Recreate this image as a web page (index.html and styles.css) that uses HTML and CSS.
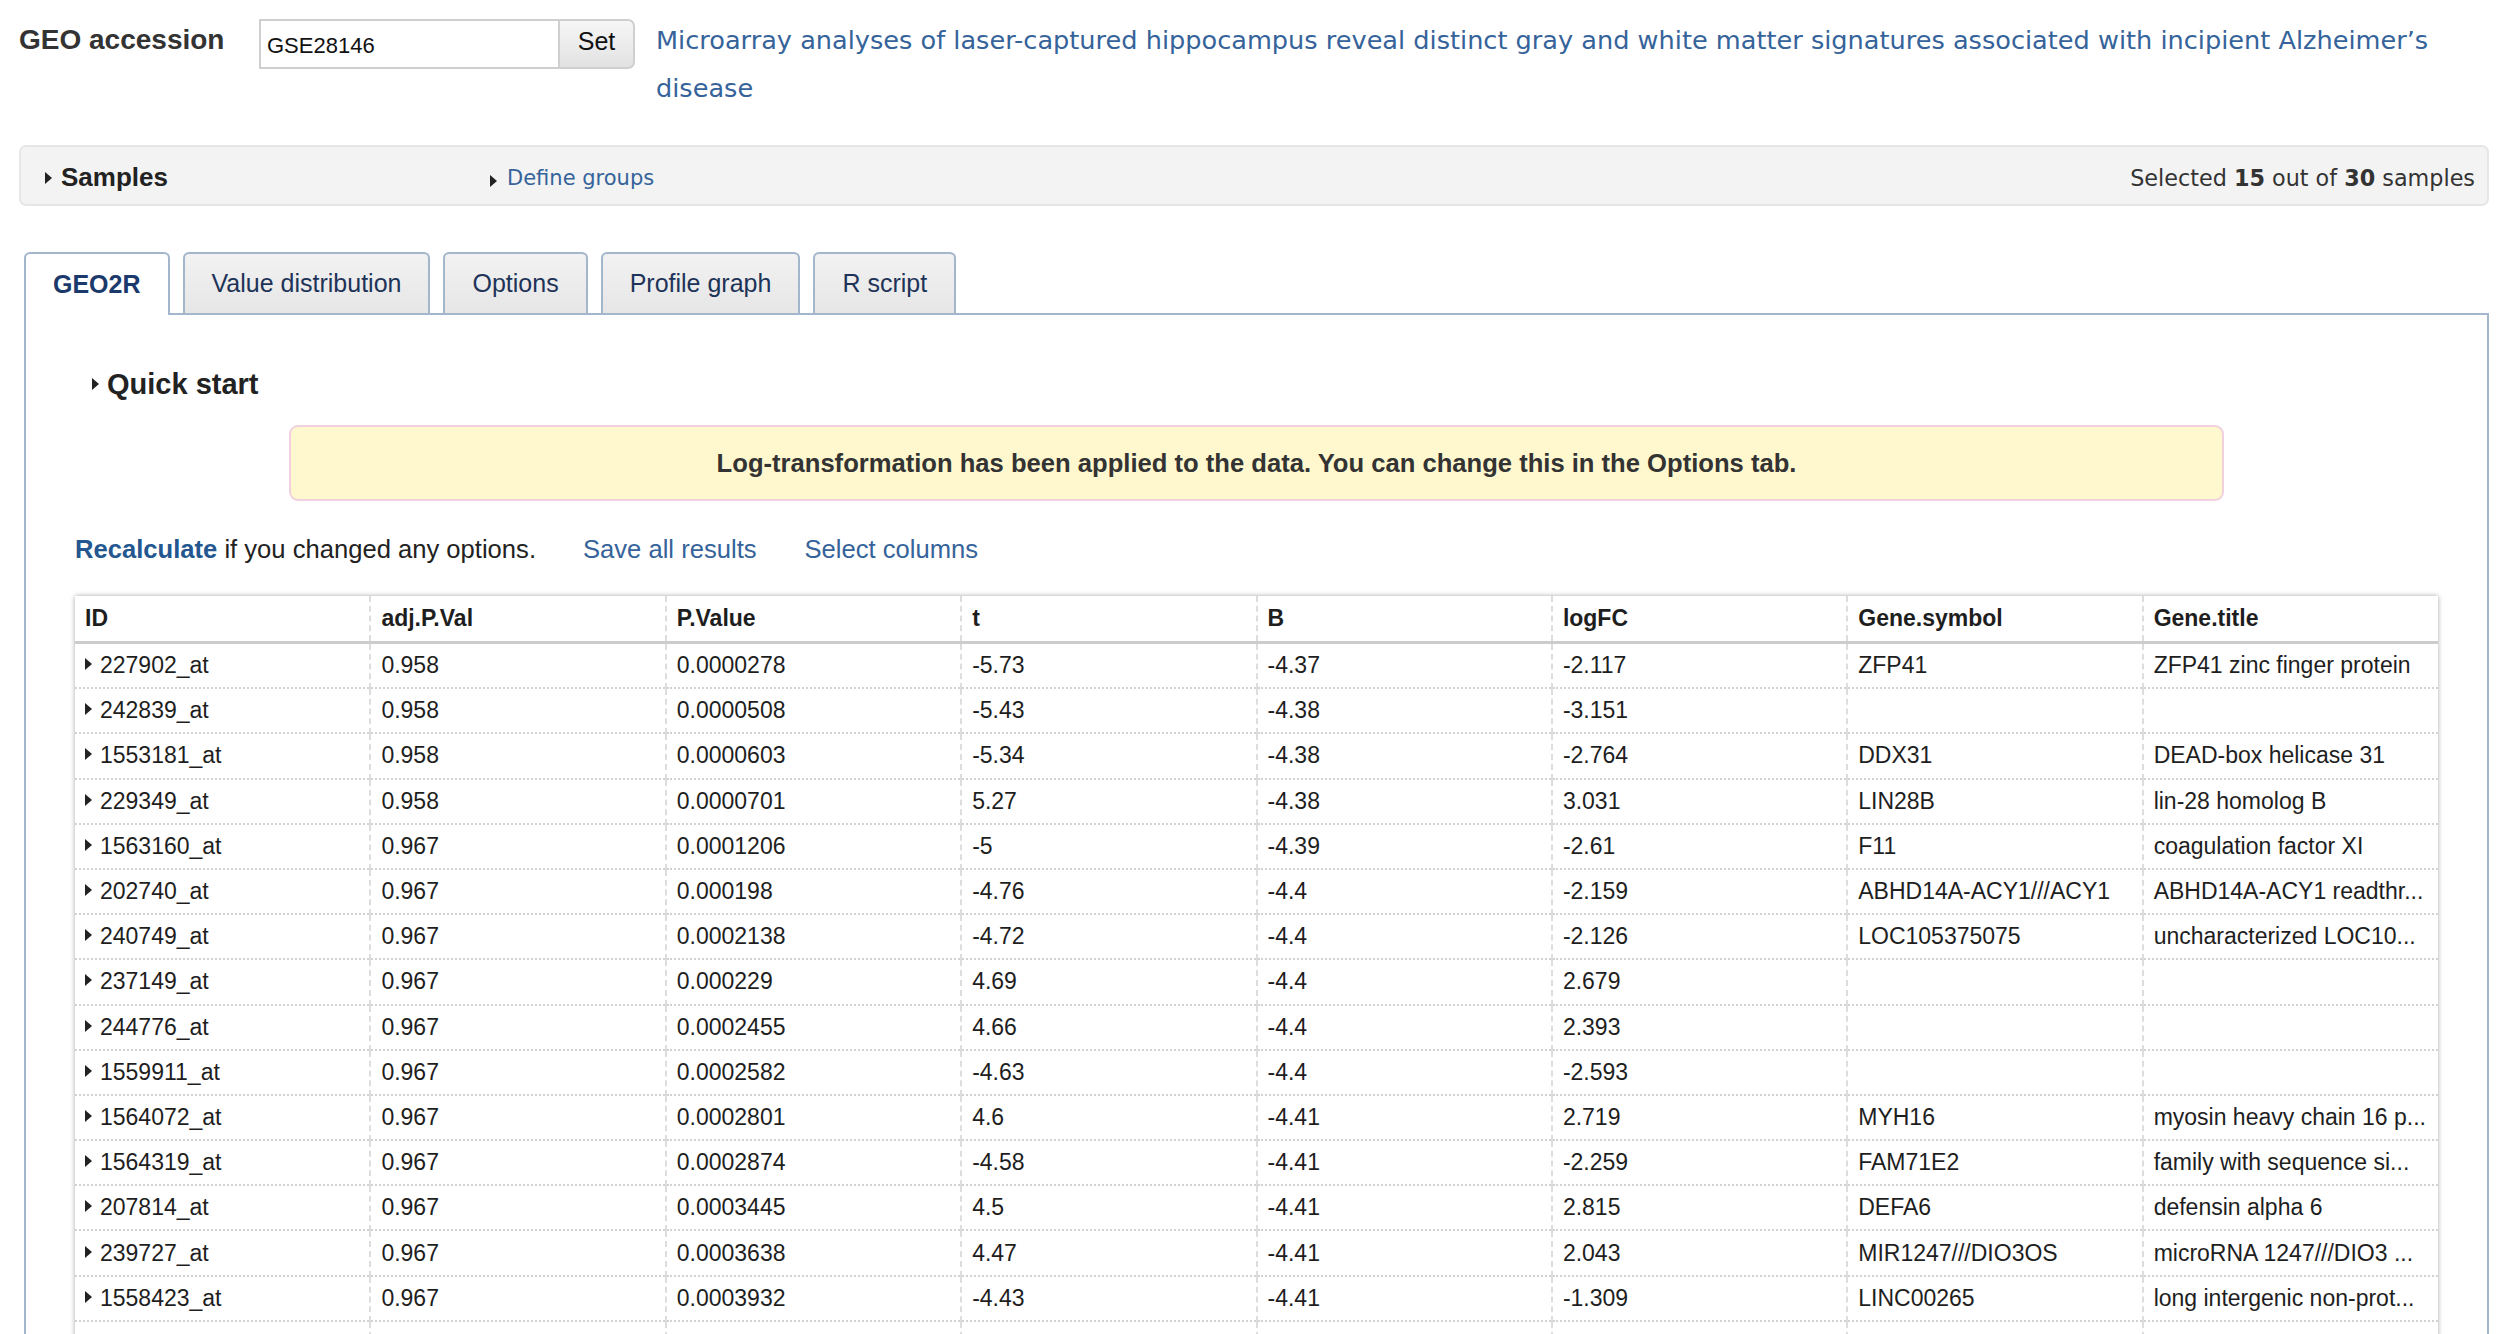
FILE: index.html
```html
<!DOCTYPE html>
<html>
<head>
<meta charset="utf-8">
<title>GEO2R</title>
<link rel="stylesheet" href="styles.css">
</head>
<body>
<div class="page">
  <div class="topbar">
    <div class="geo-label">GEO accession</div>
    <div class="acc-form">
      <input class="acc-input" type="text" value="GSE28146">
      <button class="acc-btn">Set</button>
    </div>
    <a class="series-title" href="#">Microarray analyses of laser-captured hippocampus reveal distinct gray and white matter signatures associated with incipient Alzheimer’s disease</a>
  </div>

  <div class="samples-bar">
    <div class="samples-left"><span class="tri"></span><span class="samples-title">Samples</span></div>
    <div class="define"><span class="tri tri-small"></span><a href="#" class="link">Define groups</a></div>
    <div class="selected">Selected <b>15</b> out of <b>30</b> samples</div>
  </div>

  <div class="tabs">
    <div class="tab active">GEO2R</div>
    <div class="tab">Value distribution</div>
    <div class="tab">Options</div>
    <div class="tab">Profile graph</div>
    <div class="tab">R script</div>
  </div>

  <div class="panel">
    <div class="quick"><span class="tri"></span><span class="quick-title">Quick start</span></div>
    <div class="notice">Log-transformation has been applied to the data. You can change this in the Options tab.</div>
    <div class="actions">
      <span><a href="#" class="recalc">Recalculate</a> if you changed any options.</span>
      <a href="#" class="act-link">Save all results</a>
      <a href="#" class="act-link">Select columns</a>
    </div>
    <div class="table-wrap">
      <table class="results">
        <thead>
          <tr><th>ID</th><th>adj.P.Val</th><th>P.Value</th><th>t</th><th>B</th><th>logFC</th><th>Gene.symbol</th><th>Gene.title</th></tr>
        </thead>
        <tbody>
          <tr><td><span class="tri tri-row"></span>227902_at</td><td>0.958</td><td>0.0000278</td><td>-5.73</td><td>-4.37</td><td>-2.117</td><td>ZFP41</td><td>ZFP41 zinc finger protein</td></tr>
          <tr><td><span class="tri tri-row"></span>242839_at</td><td>0.958</td><td>0.0000508</td><td>-5.43</td><td>-4.38</td><td>-3.151</td><td></td><td></td></tr>
          <tr><td><span class="tri tri-row"></span>1553181_at</td><td>0.958</td><td>0.0000603</td><td>-5.34</td><td>-4.38</td><td>-2.764</td><td>DDX31</td><td>DEAD-box helicase 31</td></tr>
          <tr><td><span class="tri tri-row"></span>229349_at</td><td>0.958</td><td>0.0000701</td><td>5.27</td><td>-4.38</td><td>3.031</td><td>LIN28B</td><td>lin-28 homolog B</td></tr>
          <tr><td><span class="tri tri-row"></span>1563160_at</td><td>0.967</td><td>0.0001206</td><td>-5</td><td>-4.39</td><td>-2.61</td><td>F11</td><td>coagulation factor XI</td></tr>
          <tr><td><span class="tri tri-row"></span>202740_at</td><td>0.967</td><td>0.000198</td><td>-4.76</td><td>-4.4</td><td>-2.159</td><td>ABHD14A-ACY1///ACY1</td><td>ABHD14A-ACY1 readthr...</td></tr>
          <tr><td><span class="tri tri-row"></span>240749_at</td><td>0.967</td><td>0.0002138</td><td>-4.72</td><td>-4.4</td><td>-2.126</td><td>LOC105375075</td><td>uncharacterized LOC10...</td></tr>
          <tr><td><span class="tri tri-row"></span>237149_at</td><td>0.967</td><td>0.000229</td><td>4.69</td><td>-4.4</td><td>2.679</td><td></td><td></td></tr>
          <tr><td><span class="tri tri-row"></span>244776_at</td><td>0.967</td><td>0.0002455</td><td>4.66</td><td>-4.4</td><td>2.393</td><td></td><td></td></tr>
          <tr><td><span class="tri tri-row"></span>1559911_at</td><td>0.967</td><td>0.0002582</td><td>-4.63</td><td>-4.4</td><td>-2.593</td><td></td><td></td></tr>
          <tr><td><span class="tri tri-row"></span>1564072_at</td><td>0.967</td><td>0.0002801</td><td>4.6</td><td>-4.41</td><td>2.719</td><td>MYH16</td><td>myosin heavy chain 16 p...</td></tr>
          <tr><td><span class="tri tri-row"></span>1564319_at</td><td>0.967</td><td>0.0002874</td><td>-4.58</td><td>-4.41</td><td>-2.259</td><td>FAM71E2</td><td>family with sequence si...</td></tr>
          <tr><td><span class="tri tri-row"></span>207814_at</td><td>0.967</td><td>0.0003445</td><td>4.5</td><td>-4.41</td><td>2.815</td><td>DEFA6</td><td>defensin alpha 6</td></tr>
          <tr><td><span class="tri tri-row"></span>239727_at</td><td>0.967</td><td>0.0003638</td><td>4.47</td><td>-4.41</td><td>2.043</td><td>MIR1247///DIO3OS</td><td>microRNA 1247///DIO3 ...</td></tr>
          <tr><td><span class="tri tri-row"></span>1558423_at</td><td>0.967</td><td>0.0003932</td><td>-4.43</td><td>-4.41</td><td>-1.309</td><td>LINC00265</td><td>long intergenic non-prot...</td></tr>
          <tr><td><span class="tri tri-row"></span></td><td></td><td></td><td></td><td></td><td></td><td></td><td></td></tr>
        </tbody>
      </table>
    </div>
  </div>
</div>
</body>
</html>
```

FILE: styles.css
```css
html, body {
  margin: 0;
  padding: 0;
  background: #ffffff;
}
body {
  font-family: "Liberation Sans", Arial, Helvetica, sans-serif;
  color: #222;
  overflow: hidden;
}
.page {
  padding: 16px 31px 0 19px;
}
a { text-decoration: none; }

/* top bar */
.topbar {
  display: flex;
  align-items: flex-start;
}
.geo-label {
  width: 240px;
  flex: none;
  font-weight: bold;
  font-size: 28px;
  line-height: 48px;
  color: #333;
}
.acc-form {
  display: flex;
  flex: none;
  margin-top: 3px;
  height: 50px;
}
.acc-input {
  box-sizing: border-box;
  width: 299px;
  height: 50px;
  border: 2px solid #cfcfcf;
  border-right: none;
  padding: 4px 6px 0 6px;
  font-family: "Liberation Sans", Arial, sans-serif;
  font-size: 22px;
  color: #111;
  outline: none;
  margin: 0;
}
.acc-btn {
  box-sizing: border-box;
  width: 77px;
  height: 50px;
  margin: 0;
  border: 2px solid #cfcfcf;
  border-radius: 0 7px 7px 0;
  background: linear-gradient(#f6f6f6, #e2e2e2);
  font-family: "Liberation Sans", Arial, sans-serif;
  font-size: 25px;
  color: #111;
  padding: 0 0 6px 0;
}
.series-title {
  display: block;
  margin-left: 21px;
  width: 1810px;
  font-family: "DejaVu Sans", Verdana, sans-serif;
  font-size: 25.6px;
  line-height: 48px;
  color: #35639a;
}

/* samples bar */
.samples-bar {
  margin-top: 33px;
  height: 61px;
  box-sizing: border-box;
  display: flex;
  align-items: center;
  background: #f3f3f3;
  border: 2px solid #e6e6e6;
  border-radius: 7px;
  padding: 0 12px 0 24px;
}
.samples-left {
  width: 445px;
  display: flex;
  align-items: center;
  padding-top: 4px;
}
.samples-title {
  font-weight: bold;
  font-size: 26px;
  color: #222;
  margin-left: 9px;
}
.define {
  display: flex;
  align-items: center;
  padding-top: 4px;
}
.link {
  font-family: "DejaVu Sans", Verdana, sans-serif;
  font-size: 21px;
  color: #35639a;
  margin-left: 10px;
}
.selected {
  margin-left: auto;
  padding-top: 4px;
  font-family: "DejaVu Sans", Verdana, sans-serif;
  font-size: 22.3px;
  color: #333;
}
.selected b { color: #333; }

.tri {
  display: inline-block;
  width: 0;
  height: 0;
  border-left: 7px solid #222;
  border-top: 6px solid transparent;
  border-bottom: 6px solid transparent;
}
.tri-small {
  margin-top: 6px;
}

/* tabs */
.tabs {
  display: flex;
  margin: 46px 0 0 5px;
  gap: 13px;
  position: relative;
  z-index: 2;
}
.tab {
  box-sizing: border-box;
  height: 61px;
  padding: 0 27px;
  display: flex;
  align-items: center;
  font-size: 25px;
  color: #1e3358;
  background: linear-gradient(#f2f2f2, #e6e6e6);
  border: 2px solid #a3b6cb;
  border-bottom: none;
  border-radius: 6px 6px 0 0;
}
.tab.active {
  background: #ffffff;
  font-weight: bold;
  color: #1b3a6b;
  height: 63px;
  margin-bottom: -2px;
}

/* panel */
.panel {
  margin-left: 5px;
  border: 2px solid #a3b6cb;
  border-bottom: none;
  padding: 0 49px 40px 49px;
  min-height: 1100px;
}
.quick {
  display: flex;
  align-items: center;
  margin-left: 17px;
  margin-top: 51px;
  height: 36px;
}
.quick-title {
  font-weight: bold;
  font-size: 29px;
  margin-left: 8px;
  color: #222;
}
.notice {
  box-sizing: border-box;
  width: 1935px;
  margin: 23px auto 0 auto;
  margin-left: 214px;
  height: 76px;
  display: flex;
  align-items: center;
  justify-content: center;
  background: #fff8ce;
  border: 2px solid #f1d1de;
  border-radius: 9px;
  font-weight: bold;
  font-size: 25.6px;
  color: #333;
}
.actions {
  margin-top: 30px;
  display: flex;
  align-items: center;
  height: 36px;
  font-size: 25.6px;
  color: #222;
}
.recalc {
  font-weight: bold;
  color: #24578f;
}
.act-link {
  color: #35639a;
  margin-left: 47px;
}
.actions .act-link + .act-link { margin-left: 48px; }

/* table */
.table-wrap {
  margin-top: 29px;
  box-shadow: 0 0 5px rgba(0,0,0,0.35);
}
.results {
  width: 100%;
  border-collapse: collapse;
  table-layout: fixed;
  font-size: 23px;
  color: #1e1e1e;
}
.results th {
  height: 45px;
  text-align: left;
  font-weight: bold;
  padding: 0 10px;
  border-bottom: 3px solid #cccccc;
  border-left: 2px dashed #dddddd;
}
.results td {
  height: 43.2px;
  padding: 0 10px;
  white-space: nowrap;
  overflow: hidden;
  border-bottom: 2px dotted #d2d2d2;
  border-left: 2px dashed #dddddd;
}
.results th:first-child, .results td:first-child { border-left: none; }
.tri-row {
  margin-right: 8px;
  vertical-align: 3px;
}
```
